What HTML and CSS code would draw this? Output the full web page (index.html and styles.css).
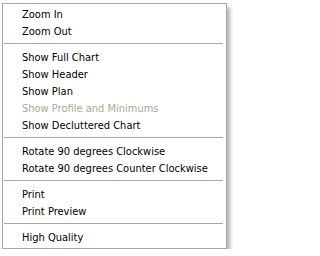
FILE: index.html
```html
<!DOCTYPE html>
<html>
<head>
<meta charset="utf-8">
<link rel="stylesheet" href="styles.css">
</head>
<body>
<div class="menu">
  <div class="item">Zoom In</div>
  <div class="item">Zoom Out</div>
  <div class="sep"></div>
  <div class="item">Show Full Chart</div>
  <div class="item">Show Header</div>
  <div class="item">Show Plan</div>
  <div class="item disabled">Show Profile and Minimums</div>
  <div class="item">Show Decluttered Chart</div>
  <div class="sep"></div>
  <div class="item">Rotate 90 degrees Clockwise</div>
  <div class="item">Rotate 90 degrees Counter Clockwise</div>
  <div class="sep"></div>
  <div class="item">Print</div>
  <div class="item">Print Preview</div>
  <div class="sep"></div>
  <div class="item">High Quality</div>
</div>
</body>
</html>
```

FILE: styles.css
```css
html, body {
  margin: 0;
  padding: 0;
  background: #ffffff;
}
body {
  padding: 3px 0 0 2px;
}
.menu {
  width: 223px;
  border: 1px solid #aca899;
  background: #ffffff;
  padding: 2px 0;
  box-shadow: 3px 4px 4px rgba(0, 0, 0, 0.3);
  font-family: "DejaVu Sans Condensed", "DejaVu Sans", sans-serif;
  font-size: 11px;
  color: #000000;
}
.item {
  height: 17px;
  line-height: 17px;
  padding-left: 19px;
  white-space: nowrap;
}
.item.disabled {
  color: #aca899;
}
.sep {
  height: 9px;
  display: flex;
  flex-direction: column;
  padding: 3px 3px 0 1px;
  box-sizing: border-box;
}
.sep::before {
  content: "";
  display: block;
  height: 1px;
  background: #aca899;
}
```
